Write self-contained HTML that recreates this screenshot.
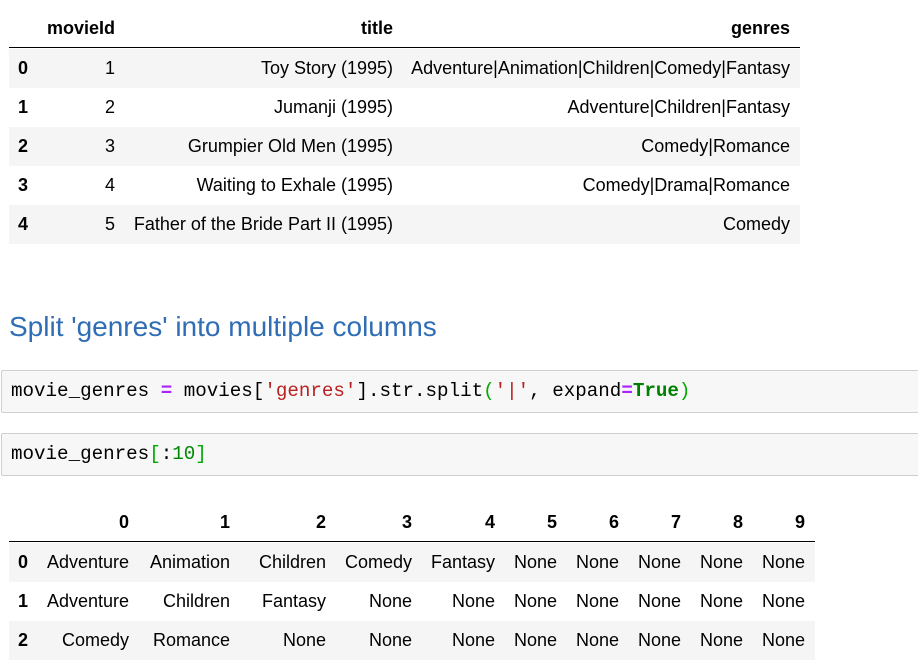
<!DOCTYPE html>
<html><head><style>
body{margin:0;width:918px;height:638px;overflow:hidden;background:#fff;font-family:"Liberation Sans",Arial,sans-serif;font-size:18px;color:#000;position:relative}
.a{position:absolute;white-space:nowrap;line-height:20px}
.r{text-align:right}
.b{font-weight:bold}
.g{position:absolute;background:#f5f5f5}
.ln{position:absolute;height:1px;background:#000}
.code{position:absolute;left:1px;width:930px;height:43px;background:#f7f7f7;border:1px solid #cfcfcf;border-radius:2px;font-family:"Liberation Mono",monospace;font-size:19.2px;line-height:41px;padding-left:9px;box-sizing:border-box;white-space:nowrap}
</style></head><body>
<div class="g" style="left:9px;top:49px;width:791px;height:39px"></div>
<div class="g" style="left:9px;top:127px;width:791px;height:39px"></div>
<div class="g" style="left:9px;top:205px;width:791px;height:39px"></div>
<div class="ln" style="left:9px;top:47px;width:791px"></div>

<div class="a b r" style="right:803px;top:18px">movieId</div>
<div class="a b r" style="right:525px;top:18px">title</div>
<div class="a b r" style="right:128px;top:18px">genres</div>

<div class="a b" style="left:18px;top:58px">0</div>
<div class="a b" style="left:18px;top:97px">1</div>
<div class="a b" style="left:18px;top:136px">2</div>
<div class="a b" style="left:18px;top:175px">3</div>
<div class="a b" style="left:18px;top:214px">4</div>

<div class="a r" style="right:803px;top:58px">1</div>
<div class="a r" style="right:803px;top:97px">2</div>
<div class="a r" style="right:803px;top:136px">3</div>
<div class="a r" style="right:803px;top:175px">4</div>
<div class="a r" style="right:803px;top:214px">5</div>

<div class="a r" style="right:525px;top:58px">Toy Story (1995)</div>
<div class="a r" style="right:525px;top:97px">Jumanji (1995)</div>
<div class="a r" style="right:525px;top:136px">Grumpier Old Men (1995)</div>
<div class="a r" style="right:525px;top:175px">Waiting to Exhale (1995)</div>
<div class="a r" style="right:525px;top:214px">Father of the Bride Part II (1995)</div>

<div class="a r" style="right:128px;top:58px">Adventure|Animation|Children|Comedy|Fantasy</div>
<div class="a r" style="right:128px;top:97px">Adventure|Children|Fantasy</div>
<div class="a r" style="right:128px;top:136px">Comedy|Romance</div>
<div class="a r" style="right:128px;top:175px">Comedy|Drama|Romance</div>
<div class="a r" style="right:128px;top:214px">Comedy</div>

<div class="a" style="left:9px;top:311px;font-size:28px;line-height:32px;color:#2f6db5">Split 'genres' into multiple columns</div>

<div class="code" style="top:370px">movie_genres <span style="color:#aa22ff;font-weight:bold">=</span> movies[<span style="color:#ba2121">'genres'</span>].str.split<span style="color:#0a0">(</span><span style="color:#ba2121">'|'</span>, expand<span style="color:#aa22ff;font-weight:bold">=</span><span style="color:#008000;font-weight:bold">True</span><span style="color:#0a0">)</span></div>
<div class="code" style="top:433px">movie_genres<span style="color:#0a0">[</span>:<span style="color:#080">10</span><span style="color:#0a0">]</span></div>

<div class="g" style="left:9px;top:543px;width:806px;height:39px"></div>
<div class="g" style="left:9px;top:621px;width:806px;height:39px"></div>
<div class="ln" style="left:9px;top:541px;width:806px"></div>

<div class="a b r" style="right:789px;top:512px">0</div>
<div class="a b r" style="right:688px;top:512px">1</div>
<div class="a b r" style="right:592px;top:512px">2</div>
<div class="a b r" style="right:506px;top:512px">3</div>
<div class="a b r" style="right:423px;top:512px">4</div>
<div class="a b r" style="right:361px;top:512px">5</div>
<div class="a b r" style="right:299px;top:512px">6</div>
<div class="a b r" style="right:237px;top:512px">7</div>
<div class="a b r" style="right:175px;top:512px">8</div>
<div class="a b r" style="right:113px;top:512px">9</div>

<div class="a b" style="left:18px;top:552px">0</div>
<div class="a r" style="right:789px;top:552px">Adventure</div>
<div class="a r" style="right:688px;top:552px">Animation</div>
<div class="a r" style="right:592px;top:552px">Children</div>
<div class="a r" style="right:506px;top:552px">Comedy</div>
<div class="a r" style="right:423px;top:552px">Fantasy</div>
<div class="a r" style="right:361px;top:552px">None</div>
<div class="a r" style="right:299px;top:552px">None</div>
<div class="a r" style="right:237px;top:552px">None</div>
<div class="a r" style="right:175px;top:552px">None</div>
<div class="a r" style="right:113px;top:552px">None</div>

<div class="a b" style="left:18px;top:591px">1</div>
<div class="a r" style="right:789px;top:591px">Adventure</div>
<div class="a r" style="right:688px;top:591px">Children</div>
<div class="a r" style="right:592px;top:591px">Fantasy</div>
<div class="a r" style="right:506px;top:591px">None</div>
<div class="a r" style="right:423px;top:591px">None</div>
<div class="a r" style="right:361px;top:591px">None</div>
<div class="a r" style="right:299px;top:591px">None</div>
<div class="a r" style="right:237px;top:591px">None</div>
<div class="a r" style="right:175px;top:591px">None</div>
<div class="a r" style="right:113px;top:591px">None</div>

<div class="a b" style="left:18px;top:630px">2</div>
<div class="a r" style="right:789px;top:630px">Comedy</div>
<div class="a r" style="right:688px;top:630px">Romance</div>
<div class="a r" style="right:592px;top:630px">None</div>
<div class="a r" style="right:506px;top:630px">None</div>
<div class="a r" style="right:423px;top:630px">None</div>
<div class="a r" style="right:361px;top:630px">None</div>
<div class="a r" style="right:299px;top:630px">None</div>
<div class="a r" style="right:237px;top:630px">None</div>
<div class="a r" style="right:175px;top:630px">None</div>
<div class="a r" style="right:113px;top:630px">None</div>
</body></html>
